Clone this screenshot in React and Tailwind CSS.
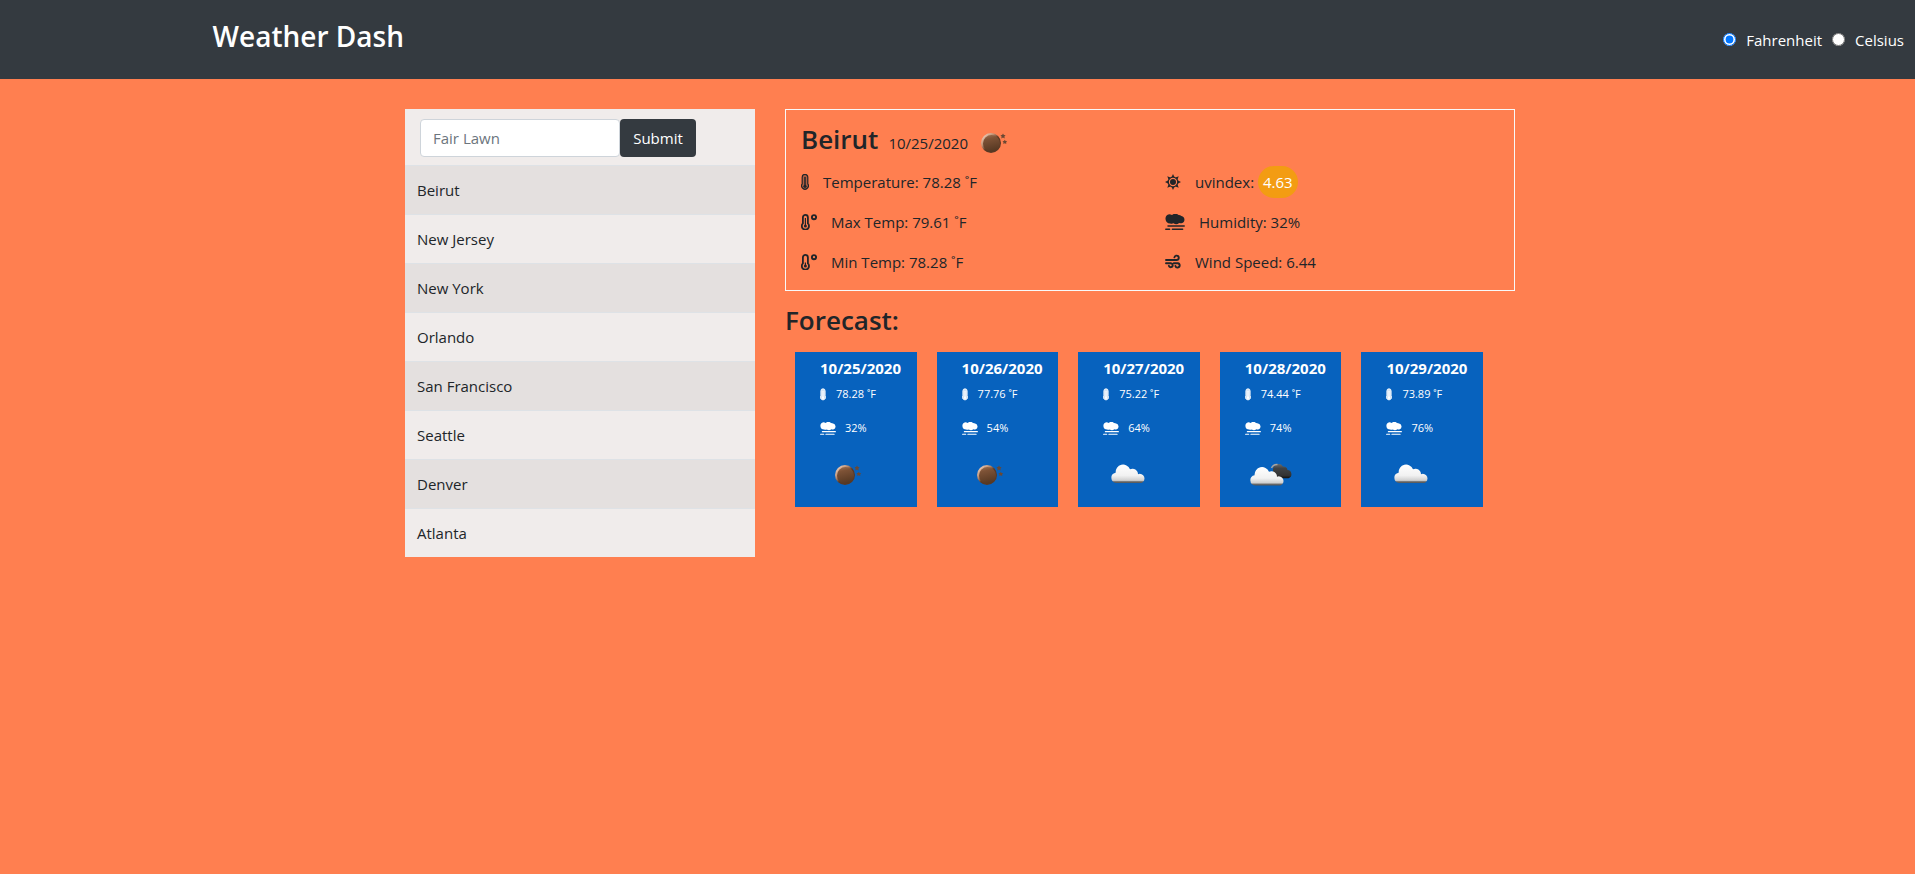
import React, { useState } from "react";

const CITIES = ["Beirut", "New Jersey", "New York", "Orlando", "San Francisco", "Seattle", "Denver", "Atlanta"];

const FORECAST = [
  { date: "10/25/2020", temp: "78.28", humidity: 32, sky: "night" },
  { date: "10/26/2020", temp: "77.76", humidity: 54, sky: "night" },
  { date: "10/27/2020", temp: "75.22", humidity: 64, sky: "cloud" },
  { date: "10/28/2020", temp: "74.44", humidity: 74, sky: "broken" },
  { date: "10/29/2020", temp: "73.89", humidity: 76, sky: "cloud" },
];

function Thermometer({ className, fillOpacity = 0.8 }) {
  return (
    <svg viewBox="0 0 8 16" className={className} aria-hidden="true">
      <path d="M1.200 3.200a2.800 2.800 0 0 1 5.600 0v6.600a3.400 3.400 0 1 1-5.600 0z" fill="currentColor" fillOpacity={fillOpacity} stroke="currentColor" strokeWidth="1.200" />
      <path d="M4 3.500v8" stroke="currentColor" strokeWidth="1.500" strokeLinecap="round" />
      <circle cx="4" cy="12.300" r="1.600" fill="currentColor" />
    </svg>
  );
}

function ThermometerDegree({ high }) {
  return (
    <svg viewBox="0 0 16 16" className="h-4 w-4" fill="none" stroke="currentColor" aria-hidden="true">
      <path d="M1.9 3.4a2.5 2.5 0 0 1 5 0v6a3.6 3.6 0 1 1-5 0z" strokeWidth="1.8" />
      <path d={high ? "M4.4 4v8" : "M4.4 8.5v3.5"} strokeWidth="1.2" />
      <circle cx="4.4" cy="12" r="1.5" fill="currentColor" stroke="none" />
      <circle cx="13" cy="3.2" r="2.1" strokeWidth="1.9" />
    </svg>
  );
}

function Sun() {
  return (
    <svg viewBox="0 0 16 16" className="h-4 w-4" fill="none" stroke="currentColor" aria-hidden="true">
      <circle cx="8" cy="8" r="4.8" strokeWidth="1.3" />
      <circle cx="8" cy="8" r="3" fill="currentColor" stroke="none" />
      <path
        d="M8 0l1.4 3H6.6zM8 16l1.4-3H6.6zM0 8l3-1.4v2.8zM16 8l-3-1.4v2.8zM2.3 2.3l3.1 1.2-1.9 1.9zM13.7 2.3l-3.1 1.2 1.9 1.9zM2.3 13.7l3.1-1.2-1.9-1.9zM13.7 13.7l-3.1-1.2 1.9-1.9z"
        fill="currentColor"
        stroke="none"
      />
    </svg>
  );
}

function Fog({ className }) {
  return (
    <svg viewBox="0 0 20 16" className={className} aria-hidden="true">
      <path
        d="M4.200 0.200a4.500 4.500 0 0 1 2.800.9 5 5 0 0 1 6.600-.1 4 4 0 0 1 2.800.9 3.800 3.800 0 0 1 .2 7.400 4.400 4.400 0 0 1-2.400-.4 4.800 4.800 0 0 1-5.700.4 4.200 4.200 0 0 1-3.300.1A4.650 4.650 0 0 1 4.200.200z"
        fill="currentColor"
      />
      <path d="M3 12h16.200M.8 15.200h3.800M7.400 15.200h10.200" stroke="currentColor" strokeWidth="1.500" strokeLinecap="round" />
    </svg>
  );
}

function Wind() {
  return (
    <svg viewBox="0 0 16 16" className="h-4 w-4" fill="none" stroke="currentColor" strokeWidth="1.9" strokeLinecap="round" aria-hidden="true">
      <path d="M1 6h10.6a2.2 2.2 0 1 0-2.2-2.6" />
      <path d="M1 9.2h4.8a2 2 0 1 1-2 2.6" />
      <path d="M8.8 9.2h4a2.2 2.2 0 1 1-2.4 2.8" />
    </svg>
  );
}

function SkyGradients({ id }) {
  return (
    <defs>
      <linearGradient id={id + "-moon"} x1="0" y1="0" x2="0.25" y2="1">
        <stop offset="0" stopColor="#a27455" />
        <stop offset="0.3" stopColor="#7d5236" />
        <stop offset="1" stopColor="#573923" />
      </linearGradient>
      <linearGradient id={id + "-rim"} x1="0" y1="0" x2="0.8" y2="0.8">
        <stop offset="0.1" stopColor="#f5d7c4" />
        <stop offset="0.45" stopColor="#b98a6c" />
        <stop offset="0.65" stopColor="#5b3823" />
      </linearGradient>
      <linearGradient id={id + "-white"} x1="0" y1="0" x2="0" y2="1">
        <stop offset="0" stopColor="#ffffff" />
        <stop offset="0.6" stopColor="#f1f1f1" />
        <stop offset="0.86" stopColor="#cfcfcf" />
        <stop offset="0.93" stopColor="#6a6a6a" />
        <stop offset="1" stopColor="#555555" />
      </linearGradient>
      <linearGradient id={id + "-dark"} x1="0" y1="0" x2="0" y2="1">
        <stop offset="0" stopColor="#6a6a6a" />
        <stop offset="0.3" stopColor="#404244" />
        <stop offset="0.8" stopColor="#333333" />
        <stop offset="1" stopColor="#111111" />
      </linearGradient>
    </defs>
  );
}

const CLOUD = "M5.2 19A5.2 5.2 0 0 1 4.600 8.700 7.500 7.500 0 0 1 19 5.200 5.600 5.600 0 0 1 27 10.200 4.500 4.500 0 0 1 30.500 19z";

function Sky({ kind, id }) {
  return (
    <svg viewBox="0 0 50 50" className="h-[50px] w-[50px] shrink-0" role="img" aria-label={kind}>
      <SkyGradients id={id} />
      {kind === "night" && (
        <g>
          <circle cx="25" cy="25" r="10" fill={`url(#${id}-rim)`} />
          <circle cx="25.500" cy="25.500" r="8.500" fill={`url(#${id}-moon)`} />
          <path d="M37 15.500l.9 1.500 1.700.3-1.200 1.300.3 1.800-1.700-.8-1.700.8.300-1.800-1.200-1.300 1.700-.3zM38.800 21.700l.8 1.300 1.500.3-1 1.200.2 1.500-1.500-.7-1.500.7.200-1.500-1-1.200 1.500-.3z" fill="#6b4833" />
        </g>
      )}
      {kind === "cloud" && <path d={CLOUD} fill={`url(#${id}-white)`} transform="translate(8 14)" />}
      {kind === "broken" && (
        <g>
          <path d="M28 25V19a5.500 5.500 0 0 1 10-2.500 4 4 0 0 1 4.500 3.500 4.200 4.200 0 0 1 1 8.200H33z" fill={`url(#${id}-dark)`} />
          <path d="M26.500 18a6 6 0 0 1 6-3.500" fill="none" stroke="#a9a49f" strokeWidth="1.400" />
          <path d={CLOUD} fill={`url(#${id}-white)`} transform="translate(5 16.500)" />
        </g>
      )}
    </svg>
  );
}

function Detail({ icon, children }) {
  return (
    <div className="flex h-10 items-center gap-[14px]">
      {icon}
      <span>{children}</span>
    </div>
  );
}

function ForecastCard({ day, index }) {
  return (
    <article className="h-[155px] min-w-0 flex-1 bg-[#0762be] pt-1 pl-[25px] text-[11px] text-white">
      <h3 className="text-[15px] leading-6 font-bold">{day.date}</h3>
      <div className="flex h-7 items-center gap-[10px]">
        <Thermometer className="h-[13px] w-[6px]" />
        <span>{day.temp} ˚F</span>
      </div>
      <div className="mt-[6px] flex h-7 items-center gap-[9px]">
        <Fog className="h-[13px] w-4" />
        <span>{day.humidity}%</span>
      </div>
      <div className="mt-2">
        <Sky kind={day.sky} id={"day" + index} />
      </div>
    </article>
  );
}

export default function App() {
  const [unit, setUnit] = useState("fahrenheit");
  return (
    <div className="min-h-screen bg-[#ff7f50] font-['Open_Sans','Noto_Sans',sans-serif] text-[15px] leading-6 text-[#212529]">
      <header className="flex h-[79px] items-center justify-between bg-[#343a40] pr-[11px] pl-[11.1%] text-white">
        <h1 className="pb-2 text-[28px] leading-8 font-semibold">Weather Dash</h1>
        <div className="flex items-center gap-[10px]">
          <label className="flex items-center gap-[10px]">
            <input type="radio" name="unit" className="h-[13px] w-[13px]" checked={unit === "fahrenheit"} onChange={() => setUnit("fahrenheit")} />
            Fahrenheit
          </label>
          <label className="flex items-center gap-[10px]">
            <input type="radio" name="unit" className="h-[13px] w-[13px]" checked={unit === "celsius"} onChange={() => setUnit("celsius")} />
            Celsius
          </label>
        </div>
      </header>

      <main className="pt-[30px] pl-[5px]">
        <div className="mx-auto flex max-w-[1110px] items-start gap-[30px]">
          <aside className="w-[350px] shrink-0 bg-[#f0eceb]">
            <form className="flex pt-[10px] pb-2 pl-[15px]" onSubmit={(e) => e.preventDefault()}>
              <input
                type="text"
                aria-label="City"
                placeholder="Fair Lawn"
                className="h-[38px] w-[200px] rounded-[4px] border border-[#ced4da] bg-white px-3 placeholder:text-[#6c757d]"
              />
              <button type="submit" className="h-[38px] w-[76px] rounded-[4px] bg-[#343a40] text-white">
                Submit
              </button>
            </form>
            <ul>
              {CITIES.map((city) => (
                <li key={city} className="border-t border-[#dee2e6] odd:bg-[#e4e0df]">
                  <button type="button" className="block h-12 w-full px-3 text-left">
                    {city}
                  </button>
                </li>
              ))}
            </ul>
          </aside>

          <div className="min-w-0 flex-1">
            <section className="border border-[#f8f9fa] px-[15px] pt-[10px] pb-2">
              <div className="flex h-[42px] items-center">
                <h2 className="pb-1 text-[26px] leading-9 font-semibold">Beirut</h2>
                <span className="mt-1 ml-[10px]">10/25/2020</span>
                <span className="-ml-[2px] pt-1">
                  <Sky kind="night" id="now" />
                </span>
              </div>
              <div className="grid grid-cols-2 gap-x-[30px]">
                <div>
                  <Detail icon={<Thermometer className="h-4 w-2" fillOpacity={0.35} />}>Temperature: 78.28 ˚F</Detail>
                  <Detail icon={<ThermometerDegree high />}>Max Temp: 79.61 ˚F</Detail>
                  <Detail icon={<ThermometerDegree />}>Min Temp: 78.28 ˚F</Detail>
                </div>
                <div>
                  <Detail icon={<Sun />}>
                    uvindex: <span className="inline-block rounded-2xl bg-[#f39c12] px-[5px] py-1 text-white">4.63</span>
                  </Detail>
                  <Detail icon={<Fog className="h-4 w-5" />}>Humidity: 32%</Detail>
                  <Detail icon={<Wind />}>Wind Speed: 6.44</Detail>
                </div>
              </div>
            </section>

            <h2 className="mt-3 mb-[15px] text-[26px] leading-[34px] font-semibold">Forecast:</h2>
            <div className="flex gap-5 pr-8 pl-[10px]">
              {FORECAST.map((day, i) => (
                <ForecastCard key={day.date} day={day} index={i} />
              ))}
            </div>
          </div>
        </div>
      </main>
    </div>
  );
}
